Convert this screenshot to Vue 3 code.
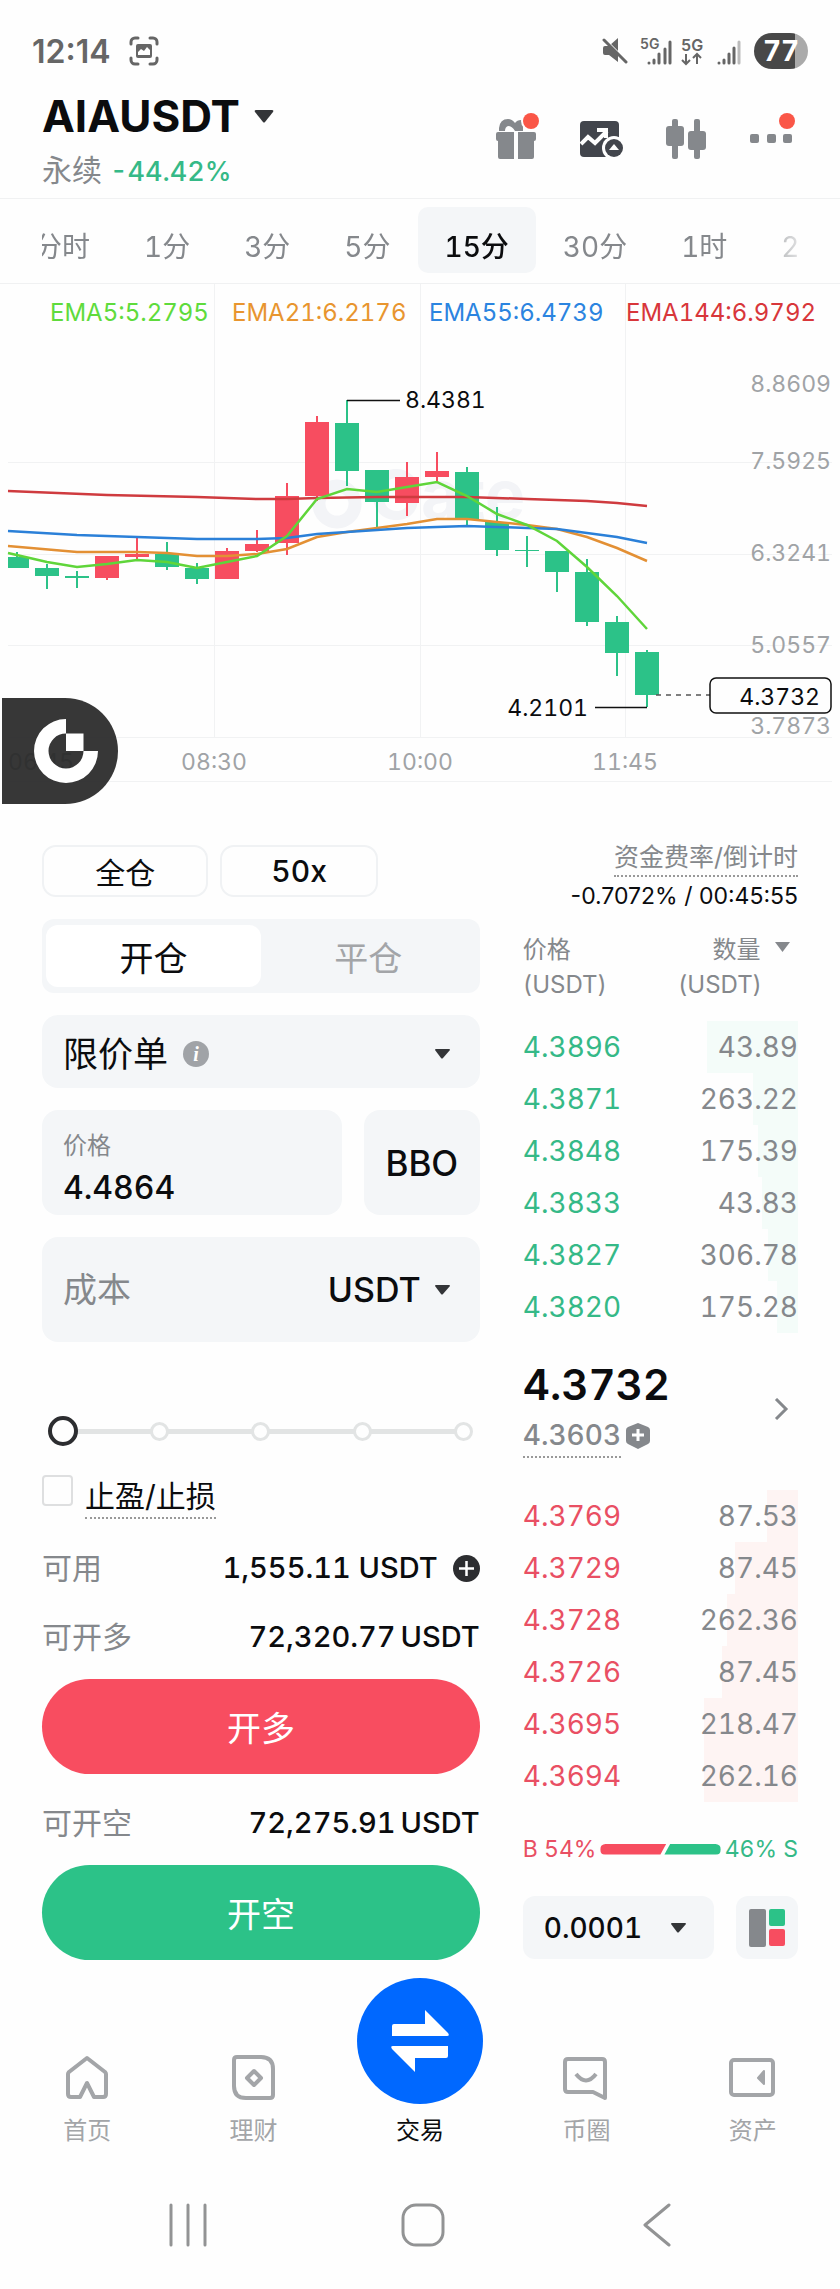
<template>
  <div class="trade-page">
    <!-- Строка состояния телефона -->
    <div class="status-bar">
      <div class="status-left">
        <span class="clock">12:14</span>
        <svg width="30" height="30" viewBox="0 0 30 30" fill="none">
          <path d="M2 8V6a4 4 0 0 1 4-4h3M21 2h3a4 4 0 0 1 4 4v2M28 22v2a4 4 0 0 1-4 4h-3M9 28H6a4 4 0 0 1-4-4v-2" stroke="#666" stroke-width="3" stroke-linecap="round" />
          <rect x="7" y="8" width="16" height="14" rx="2" fill="#666" />
          <path d="M9 19v-3l3-3 3 2 3-4 3 3v5z" fill="#fff" />
        </svg>
      </div>
      <div class="status-right">
        <svg class="mute" width="28" height="28" viewBox="0 0 28 28">
          <path d="M3 11q0-2 2-2h4l9-8v24l-9-7H5q-2 0-2-2z" fill="#666" />
          <path d="M1 -1L28 26" stroke="#fefefe" stroke-width="3" />
          <path d="M4 3L26 25" stroke="#666" stroke-width="3" stroke-linecap="round" />
        </svg>
        <svg width="64" height="32" viewBox="0 0 64 32">
          <text x="0" y="14" class="net" font-size="14">5G</text>
          <path d="M9 28v0M14 25v3M19 19v9M25 14v14M30 7v21" stroke="#666" stroke-width="3" stroke-linecap="round" />
          <text x="41" y="16" class="net" font-size="16">5G</text>
          <path d="M46 19v10M42 25l4 4 4-4M57 29V19M53 23l4-4 4 4" fill="none" stroke="#666" stroke-width="2" />
        </svg>
        <svg width="26" height="32" viewBox="0 0 26 32">
          <path d="M3 28v0M8 25v3M13 19v9M18 13v15" stroke="#666" stroke-width="3" stroke-linecap="round" />
          <path d="M23 7v21" stroke="#bbb" stroke-width="3" stroke-linecap="round" />
        </svg>
        <span class="battery">77</span>
      </div>
    </div>

    <!-- Заголовок пары -->
    <header class="pair-header">
      <div>
        <button class="pair">
          AIAUSDT
          <svg width="20" height="13" viewBox="0 0 20 13"><path d="M2 0h16q2 0 1 2l-8 10q-1 1-2 0L1 2q-1-2 1-2z" fill="#333538" /></svg>
        </button>
        <div class="pair-sub">永续 <span class="change">-44.42%</span></div>
      </div>
      <div class="actions">
        <button aria-label="礼物">
          <svg width="44" height="48" viewBox="0 0 44 48" fill="#85888c">
            <path d="M4 20v-3q1-9 9-9 4 0 7 4 2-3 6-3l2 1v10h-8q-3-5-7-5-3 1-3 5z" />
            <path d="M3 21h16v27H5q-2 0-2-2V30q-2 0-2-2v-5q0-2 2-2zM23 21h16q2 0 2 2v5q0 2-2 2v16q0 2-2 2H23z" />
            <circle cx="36" cy="10" r="10" fill="#fefefe" />
            <circle cx="36" cy="10" r="8" fill="#fa5647" />
          </svg>
        </button>
        <button aria-label="图表">
          <svg width="44" height="48" viewBox="0 0 44 48">
            <rect x="0" y="10" width="39" height="36" rx="4" fill="#42454c" />
            <path d="M1 33l7-7 7 6 12-12M17 19h9v8" fill="none" stroke="#fefefe" stroke-width="4" />
            <circle cx="34" cy="37" r="12" fill="#fefefe" />
            <circle cx="34" cy="37" r="9" fill="#42454c" />
            <path d="M34 33l5 6H29z" fill="#fefefe" />
          </svg>
        </button>
        <button aria-label="K线">
          <svg width="44" height="48" viewBox="0 0 44 48" fill="#85888c">
            <rect x="1" y="15" width="18" height="20" rx="3" />
            <rect x="7" y="8" width="6" height="40" rx="2" />
            <rect x="23" y="20" width="18" height="19" rx="3" />
            <rect x="29" y="8" width="6" height="40" rx="2" />
          </svg>
        </button>
        <button aria-label="更多">
          <svg width="46" height="48" viewBox="0 0 46 48" fill="#85888c">
            <rect x="0" y="23" width="9" height="9" rx="2" />
            <rect x="17" y="23" width="9" height="9" rx="2" />
            <rect x="33" y="23" width="9" height="9" rx="2" />
            <circle cx="37" cy="10" r="8" fill="#fa5647" />
          </svg>
        </button>
      </div>
    </header>

    <!-- Интервалы -->
    <nav class="intervals">
      <div class="intervals-clip">
        <div class="intervals-list">
          <button
            v-for="item in intervals"
            :key="item"
            :class="{ active: item === interval }"
            @click="interval = item"
          >{{ item }}</button>
        </div>
      </div>
    </nav>

    <!-- График -->
    <section class="chart">
      <svg class="chart-svg" viewBox="0 283 840 500">
        <g stroke="#f1f2f3" stroke-width="1">
          <path v-for="x in [214.5, 420.5, 625.5]" :key="x" :d="`M${x} 283V736`" />
          <path v-for="y in [461.5, 553.5, 644.5, 736.5, 780.5]" :key="y" :d="`M8 ${y}H832`" />
        </g>
        <circle cx="337" cy="503" r="18" fill="none" stroke="#f3f4f7" stroke-width="13" />
        <text x="370" y="518" class="watermark">Gate</text>

        <g v-for="(c, i) in candles" :key="i" :fill="c.up ? '#f74d60' : '#2cc288'">
          <rect :x="c.x - 1" :y="c.high" width="2" :height="c.low - c.high" />
          <rect :x="c.x - c.half" :y="c.top" :width="c.half + 12" :height="c.bottom - c.top" />
        </g>
        <polyline v-for="e in emas" :key="e.name" :points="e.points" :stroke="e.line" fill="none" stroke-width="2.5" />

        <g class="ema">
          <text v-for="e in emas" :key="e.name" :x="e.x" y="320" :fill="e.color">{{ e.name }}:{{ e.value }}</text>
        </g>
        <g class="scale">
          <text v-for="p in scale" :key="p.label" x="831" :y="p.y" text-anchor="end">{{ p.label }}</text>
          <text v-for="t in times" :key="t.label" :x="t.x" y="769" text-anchor="middle">{{ t.label }}</text>
        </g>
        <path d="M347 399.5H400M595 706.5H647" stroke="#111" stroke-width="1.5" />
        <path d="M656 694H710" stroke="#555" stroke-width="1.5" stroke-dasharray="5 5" />
        <rect x="710" y="677" width="121" height="35" rx="6" fill="#fefefe" stroke="#111" stroke-width="1.5" />
        <g class="mark">
          <text x="405" y="407">8.4381</text>
          <text x="588" y="715" text-anchor="end">4.2101</text>
          <text x="820" y="704" text-anchor="end">4.3732</text>
        </g>
      </svg>
      <button class="float-logo" aria-label="Gate">
        <svg width="64" height="64" viewBox="0 0 64 64" fill="#fff">
          <path d="M32 0a32 32 0 1 0 32 32H49.500a17.500 17.500 0 1 1-17.500-17.500z" />
          <path d="M32 14.500h17.500V32H32z" />
        </svg>
      </button>
    </section>

    <main class="trade">
      <!-- Форма ордера -->
      <form class="order-form" @submit.prevent>
        <div class="mode-row">
          <button type="button">全仓</button>
          <button type="button" class="latin">50x</button>
        </div>

        <div class="toggle">
          <button type="button" :class="{ active: side === 'open' }" @click="side = 'open'">开仓</button>
          <button type="button" :class="{ active: side === 'close' }" @click="side = 'close'">平仓</button>
        </div>

        <div class="field type-field">
          <select v-model="orderType" aria-label="限价单">
            <option>限价单</option>
          </select>
          <svg width="26" height="26" viewBox="0 0 26 26">
            <circle cx="13" cy="13" r="13" fill="#a0a3a7" />
            <text x="13" y="20" text-anchor="middle" class="info">i</text>
          </svg>
          <svg class="arrow" width="15" height="10" viewBox="0 0 15 10"><path d="M1 0h13q1 0 1 1L8 9q-1 1-2 0L0 1q0-1 1-1z" fill="#333538" /></svg>
        </div>

        <div class="price-row">
          <div class="field price-field">
            <label for="price">价格</label>
            <input id="price" v-model="price" type="text" />
          </div>
          <button type="button" class="bbo">BBO</button>
        </div>

        <div class="field cost-field">
          <input v-model="cost" type="text" placeholder="成本" aria-label="成本" />
          <select v-model="unit" aria-label="USDT">
            <option>USDT</option>
          </select>
          <svg width="15" height="10" viewBox="0 0 15 10"><path d="M1 0h13q1 0 1 1L8 9q-1 1-2 0L0 1q0-1 1-1z" fill="#333538" /></svg>
        </div>

        <div class="slider">
          <div class="slider-track"><i v-for="n in 5" :key="n"></i></div>
          <input v-model="percent" type="range" min="0" max="100" aria-label="比例" />
        </div>

        <div class="tpsl">
          <input id="tpsl" v-model="tpsl" type="checkbox" />
          <label for="tpsl">止盈/止损</label>
        </div>

        <div class="info-row">
          <span class="name">可用</span>
          <span class="value">1,555.11 USDT</span>
          <button type="button" class="plus" aria-label="充值">
            <svg width="27" height="27" viewBox="0 0 27 27">
              <circle cx="13.500" cy="13.500" r="13.500" fill="#2c2d30" />
              <path d="M13.500 6v15M6 13.500h15" stroke="#fff" stroke-width="2.500" />
            </svg>
          </button>
        </div>
        <div class="info-row">
          <span class="name">可开多</span>
          <span class="value">72,320.77&thinsp;USDT</span>
        </div>
        <button type="submit" class="submit long">开多</button>
        <div class="info-row">
          <span class="name">可开空</span>
          <span class="value">72,275.91&thinsp;USDT</span>
        </div>
        <button type="submit" class="submit short">开空</button>
      </form>

      <!-- Стакан -->
      <section class="book">
        <div class="funding">
          <span class="funding-name">资金费率/倒计时</span>
          <span class="funding-value">-0.7072% / 00:45:55</span>
        </div>

        <table>
          <thead>
            <tr>
              <th>价格<br />(USDT)</th>
              <th class="qty-head">
                数量
                <svg width="15" height="10" viewBox="0 0 15 10"><path d="M0 0h15L7.500 10z" fill="#85888c" /></svg>
                <br /><span>(USDT)</span>
              </th>
            </tr>
          </thead>
          <tbody class="green">
            <tr v-for="row in upper" :key="row.price">
              <td>{{ row.price }}</td>
              <td>
                <span class="depth" :style="{ width: row.depth + '%' }"></span>
                <span class="qty">{{ row.qty }}</span>
              </td>
            </tr>
          </tbody>
        </table>

        <div class="last">
          <div>
            <div class="last-price">4.3732</div>
            <div class="index">
              <span>4.3603</span>
              <svg width="24" height="26" viewBox="0 0 24 26">
                <path d="M12 0l10 4q2 1 2 3v11q0 2-2 3l-10 5-10-5q-2-1-2-3V7q0-2 2-3z" fill="#85888c" />
                <path d="M12 6v12M6 12h12" stroke="#fff" stroke-width="3" />
              </svg>
            </div>
          </div>
          <svg width="16" height="22" viewBox="0 0 16 22"><path d="M2 1l10 10L2 21" fill="none" stroke="#85888c" stroke-width="3" /></svg>
        </div>

        <table>
          <tbody class="red">
            <tr v-for="row in lower" :key="row.price">
              <td>{{ row.price }}</td>
              <td>
                <span class="depth" :style="{ width: row.depth + '%' }"></span>
                <span class="qty">{{ row.qty }}</span>
              </td>
            </tr>
          </tbody>
        </table>

        <div class="ratio">
          <span class="buy">B 54%</span>
          <span class="bar bar-buy"></span>
          <span class="bar bar-sell"></span>
          <span class="sell">46% S</span>
        </div>

        <div class="book-controls">
          <div class="field step-field">
            <select v-model="step" aria-label="0.0001">
              <option>0.0001</option>
            </select>
            <svg width="15" height="10" viewBox="0 0 15 10"><path d="M1 0h13q1 0 1 1L8 9q-1 1-2 0L0 1q0-1 1-1z" fill="#333538" /></svg>
          </div>
          <button class="layout-button" aria-label="布局">
            <svg width="36" height="38" viewBox="0 0 36 38">
              <rect width="17" height="38" rx="2" fill="#85888c" />
              <rect x="20" width="16" height="17" rx="2" fill="#2cc288" />
              <rect x="20" y="20" width="16" height="17" rx="2" fill="#f74d60" />
            </svg>
          </button>
        </div>
      </section>
    </main>

    <!-- Нижнее меню -->
    <nav class="tab-bar">
      <a href="#">
        <svg class="tab-icon" width="52" height="52" viewBox="0 0 52 52">
          <path d="M26 6L44 20q1 1 1 2v20q0 3-3 3h-9l-7-14-7 14h-9q-3 0-3-3V22q0-1 1-2z" />
        </svg>
        首页
      </a>
      <a href="#">
        <svg class="tab-icon" width="52" height="52" viewBox="0 0 52 52">
          <path d="M9 5h24q12 0 12 12v26q0 3-3 3H18Q6 46 6 34V8q0-3 3-3z" />
          <path d="M26 19l7 7-7 7-7-7z" />
        </svg>
        理财
      </a>
      <a href="#" class="current">
        <span class="trade-circle">
          <svg width="60" height="64" viewBox="0 0 60 64" fill="#fff">
            <path d="M2 17q0-2 2-2h31V1l23 23q2 3-1 3H2zM58 47q0 2-2 2H25v14L2 40q-2-3 1-3h55z" />
          </svg>
        </span>
        交易
      </a>
      <a href="#">
        <svg class="tab-icon" width="52" height="52" viewBox="0 0 52 52">
          <path d="M8 7h34q3 0 3 3v36l-12-6H8q-3 0-3-3V10q0-3 3-3z" />
          <path d="M16 22q10 13 20 0" />
        </svg>
        币圈
      </a>
      <a href="#">
        <svg class="tab-icon" width="52" height="52" viewBox="0 0 52 52">
          <rect x="4" y="8" width="42" height="35" rx="3" />
          <path d="M37 19v13l-6-6z" fill="#a3a5a8" stroke-width="2" />
        </svg>
        资产
      </a>
    </nav>

    <!-- Системные кнопки -->
    <div class="system-nav">
      <button aria-label="最近">
        <svg width="40" height="44" viewBox="0 0 40 44"><path d="M2 2v40M19 2v40M36 2v40" class="sys" /></svg>
      </button>
      <button aria-label="主页">
        <svg width="44" height="44" viewBox="0 0 44 44"><rect x="2" y="2" width="40" height="40" rx="13" class="sys" /></svg>
      </button>
      <button aria-label="返回">
        <svg width="28" height="44" viewBox="0 0 28 44"><path d="M26 2L2 22l24 20" class="sys" /></svg>
      </button>
    </div>
  </div>
</template>

<script setup>
import { ref } from 'vue';

const intervals = ['分时', '1分', '3分', '5分', '15分', '30分', '1时', '2时'];
const interval = ref('15分');
const side = ref('open');
const orderType = ref('限价单');
const price = ref('4.4864');
const cost = ref('');
const unit = ref('USDT');
const percent = ref(0);
const tpsl = ref(false);
const step = ref('0.0001');

// СВЕЧИ: x, high, low, верх и низ тела, рост
// Первая свеча обрезана левым краем графика
const candles = [
  [17, 551, 567, 556, 567, false],
  [47, 563, 588, 567, 575, false],
  [77, 570, 587, 575, 577, false],
  [107, 555, 579, 555, 577, true],
  [137, 536, 558, 553, 556, true],
  [167, 541, 569, 553, 566, false],
  [197, 562, 583, 567, 578, false],
  [227, 547, 578, 550, 578, true],
  [257, 529, 551, 543, 550, true],
  [287, 482, 554, 495, 542, true],
  [317, 415, 500, 421, 495, true],
  [347, 399, 485, 422, 470, false],
  [377, 469, 527, 469, 501, false],
  [407, 461, 515, 476, 502, true],
  [437, 451, 480, 470, 476, true],
  [467, 466, 524, 471, 518, false],
  [497, 506, 555, 521, 549, false],
  [527, 535, 566, 549, 550, false],
  [557, 550, 591, 550, 571, false],
  [587, 558, 625, 571, 621, false],
  [617, 615, 675, 621, 652, false],
  [647, 649, 706, 651, 694, false]
].map(([x, high, low, top, bottom, up]) => ({ x, high, low, top, bottom, up, half: Math.min(12, x - 8) }));

const emas = [
  {
    name: 'EMA144',
    value: '6.9792',
    x: 626,
    color: '#d8363a',
    line: '#cf3b3f',
    points: '8,490 107,494 197,496 257,498 287,498 317,497 377,496 437,496 467,496 527,498 557,499 587,500 617,502 647,505'
  },
  {
    name: 'EMA21',
    value: '6.2176',
    x: 232,
    color: '#e8952f',
    line: '#e39034',
    points: '8,545 77,551 137,551 167,552 197,555 227,555 257,553 287,548 317,536 347,531 377,527 407,523 437,518 467,518 497,521 527,524 557,528 587,536 617,547 647,560'
  },
  {
    name: 'EMA55',
    value: '6.4739',
    x: 429,
    color: '#2b84e0',
    line: '#2b80d8',
    points: '8,530 77,534 137,536 197,538 257,538 287,537 317,533 347,531 377,529 407,527 437,526 467,525 527,527 557,528 587,532 617,536 647,542'
  },
  {
    name: 'EMA5',
    value: '5.2795',
    x: 50,
    color: '#5fdb3c',
    line: '#5fd53a',
    points: '8,552 47,561 77,566 107,563 137,559 167,561 197,567 227,561 257,555 287,535 317,498 347,488 377,491 407,486 437,481 467,495 497,513 527,524 557,540 587,566 617,595 647,628'
  }
];

const scale = [
  { label: '8.8609', y: 391 },
  { label: '7.5925', y: 468 },
  { label: '6.3241', y: 560 },
  { label: '5.0557', y: 652 },
  { label: '3.7873', y: 733 }
];

const times = [
  { label: '06:45', x: 41 },
  { label: '08:30', x: 214 },
  { label: '10:00', x: 420 },
  { label: '11:45', x: 625 }
];

// СТАКАН
const upper = [
  { price: '4.3896', qty: '43.89', depth: 55 },
  { price: '4.3871', qty: '263.22', depth: 27 },
  { price: '4.3848', qty: '175.39', depth: 24 },
  { price: '4.3833', qty: '43.83', depth: 22 },
  { price: '4.3827', qty: '306.78', depth: 18 },
  { price: '4.3820', qty: '175.28', depth: 13 }
];

const lower = [
  { price: '4.3769', qty: '87.53', depth: 19 },
  { price: '4.3729', qty: '87.45', depth: 38 },
  { price: '4.3728', qty: '262.36', depth: 43 },
  { price: '4.3726', qty: '87.45', depth: 46 },
  { price: '4.3695', qty: '218.47', depth: 57 },
  { price: '4.3694', qty: '262.16', depth: 57 }
];
</script>

<style>
body {
  background: #fefefe;
}
</style>

<style scoped>
.trade-page {
  font-family: 'Inter', 'Noto Sans CJK SC', sans-serif;
  font-variant-numeric: tabular-nums;
  color: #0b0c0e;
  background: #fefefe;
}

.trade-page * {
  box-sizing: border-box;
}

button, input, select {
  font: inherit;
  color: inherit;
  margin: 0;
  padding: 0;
  border: none;
  background: none;
  outline: none;
}

button {
  cursor: pointer;
}

select {
  appearance: none;
}

svg {
  display: block;
  flex-shrink: 0;
}

/* СТРОКА СОСТОЯНИЯ */
.status-bar {
  display: flex;
  justify-content: space-between;
  align-items: center;
  height: 88px;
  padding: 14px 32px 0;
  color: #666;
}

.status-left, .status-right {
  display: flex;
  align-items: center;
}

.status-left {
  gap: 18px;
}

.status-right {
  gap: 12px;
}

.clock {
  font-size: 32px;
  font-weight: 600;
  font-variant-numeric: normal;
}

.net {
  font-weight: 600;
  fill: #666;
}

.battery {
  width: 54px;
  height: 36px;
  border-radius: 18px;
  background: linear-gradient(90deg, #484848 76%, #aaa 76%);
  color: #fff;
  font-size: 28px;
  line-height: 36px;
  font-weight: 700;
  text-align: center;
}

/* ЗАГОЛОВОК */
.pair-header {
  display: flex;
  justify-content: space-between;
  padding: 2px 44px 8px 42px;
  border-bottom: 1px solid #f0f1f2;
}

.pair {
  display: flex;
  align-items: center;
  gap: 14px;
  font-size: 44px;
  line-height: 52px;
  font-weight: 700;
}

.pair-sub {
  margin-top: 10px;
  font-size: 30px;
  line-height: 36px;
  color: #85888c;
}

.change {
  color: #35b987;
  font-size: 27px;
  font-weight: 500;
}

.actions {
  display: flex;
  gap: 41px;
  padding-top: 21px;
}

.actions button {
  height: 48px;
}

/* ИНТЕРВАЛЫ */
.intervals {
  padding: 8px 42px 10px;
  border-bottom: 1px solid #f0f1f2;
}

.intervals-clip {
  overflow: hidden;
  mask-image: linear-gradient(90deg, #000 94%, transparent 102%);
}

.intervals-list {
  display: flex;
  margin-left: -35px;
}

.intervals button {
  flex-shrink: 0;
  height: 66px;
  padding: 10px 27px 0;
  border-radius: 10px;
  font-size: 28px;
  color: #85888c;
}

.intervals .active {
  background: #f4f6f8;
  color: #0b0c0e;
  font-weight: 500;
}

/* ГРАФИК */
.chart {
  position: relative;
}

.chart-svg {
  width: 100%;
  height: auto;
}

.ema {
  font-size: 24px;
}

.scale, .mark {
  font-size: 23px;
}

.watermark {
  font-size: 68px;
  font-weight: 700;
  fill: #f3f4f7;
}

.scale {
  fill: #a0a3a6;
}

.mark {
  fill: #0b0c0e;
}

.float-logo {
  position: absolute;
  left: 2px;
  bottom: -20px;
  display: flex;
  align-items: center;
  justify-content: center;
  width: 116px;
  height: 106px;
  padding-left: 12px;
  border-radius: 0 53px 53px 0;
  background: rgba(40, 40, 40, 0.93);
}

/* ТОРГОВЛЯ */
.trade {
  display: grid;
  grid-template-columns: 35fr 22fr;
  gap: 43px;
  padding: 56px 42px 18px;
}

.order-form {
  display: flex;
  flex-direction: column;
  gap: 22px;
  padding-top: 5px;
  min-width: 0;
}

.mode-row {
  display: flex;
  gap: 12px;
}

.mode-row button {
  flex: 0 0 38%;
  height: 52px;
  border: 2px solid #f0f2f4;
  border-radius: 14px;
  font-size: 30px;
}

.mode-row .latin {
  flex-basis: 36%;
  font-weight: 500;
}

.toggle {
  display: grid;
  grid-template-columns: 1fr 1fr;
  padding: 6px 4px;
  border-radius: 12px;
  background: #f4f6f8;
}

.toggle button {
  height: 62px;
  border-radius: 12px;
  font-size: 34px;
  color: #a3a5a8;
}

.toggle .active {
  background: #fff;
  color: #0b0c0e;
}

.field {
  display: flex;
  align-items: center;
  padding: 0 30px 0 21px;
  border-radius: 16px;
  background: #f4f6f8;
}

.type-field {
  height: 73px;
  padding-top: 4px;
  gap: 14px;
  font-size: 35px;
}

.info {
  font: italic bold 20px 'Liberation Serif', serif;
  fill: #fff;
}

.arrow {
  margin-left: auto;
}

.price-row {
  display: flex;
  gap: 22px;
}

.price-field {
  flex: 1;
  min-width: 0;
  flex-direction: column;
  align-items: flex-start;
  justify-content: center;
  height: 105px;
  padding-top: 10px;
}

.price-field label {
  font-size: 24px;
  line-height: 40px;
  color: #85888c;
}

.price-field input {
  width: 100%;
  height: 44px;
  font-size: 32px;
  font-weight: 500;
}

.bbo {
  width: 116px;
  border-radius: 16px;
  background: #f4f6f8;
  font-size: 35px;
  font-weight: 500;
}

.cost-field {
  height: 105px;
  gap: 14px;
  font-size: 34px;
}

.cost-field input {
  flex: 1;
  min-width: 0;
}

.cost-field input::placeholder {
  color: #85888c;
}

.cost-field select {
  font-weight: 500;
}

.slider {
  position: relative;
  height: 30px;
  margin: 52px 6px 0;
}

.slider-track {
  display: flex;
  align-items: center;
  justify-content: space-between;
  height: 30px;
  padding: 0 1px;
  background: linear-gradient(#e2e4e4, #e2e4e4) center / 96% 5px no-repeat;
}

.slider-track i {
  width: 19px;
  height: 19px;
  border: 3px solid #e2e4e4;
  border-radius: 50%;
  background: #fefefe;
}

.slider input {
  position: absolute;
  inset: 0;
  width: 100%;
  appearance: none;
}

.slider input::-webkit-slider-thumb {
  appearance: none;
  width: 30px;
  height: 30px;
  border: 4px solid #2c2d30;
  border-radius: 50%;
  background: #fefefe;
}

.tpsl {
  display: flex;
  align-items: flex-start;
  gap: 12px;
  margin-top: 7px;
}

.tpsl input {
  appearance: none;
  width: 31px;
  height: 31px;
  border: 2px solid #dedfe0;
  border-radius: 4px;
}

.tpsl label {
  border-bottom: 2px dotted #999;
  font-size: 30px;
  line-height: 42px;
}

.info-row {
  display: flex;
  align-items: center;
  margin-top: 7px;
  font-size: 30px;
  line-height: 40px;
}

.name {
  flex: 1;
  color: #85888c;
}

.value {
  font-size: 29px;
  font-weight: 500;
}

.plus {
  margin-left: 15px;
}

.submit {
  height: 95px;
  border-radius: 48px;
  color: #fff;
  font-size: 34px;
}

.long {
  background: #f84d60;
}

.short {
  background: #2cc288;
}

/* СТАКАН */
.book {
  min-width: 0;
}

.funding {
  display: flex;
  flex-direction: column;
  align-items: flex-end;
  white-space: nowrap;
}

.funding-name {
  border-bottom: 2px dotted #999;
  line-height: 35px;
  font-size: 25px;
  color: #85888c;
}

.funding-value {
  font-size: 23px;
  line-height: 38px;
  font-variant-numeric: normal;
}

table {
  width: 100%;
  border-collapse: collapse;
}

th {
  padding: 17px 0 19px;
  font-size: 24px;
  line-height: 35px;
  font-weight: 400;
  text-align: left;
  color: #85888c;
}

.qty-head {
  padding-right: 8px;
  text-align: right;
}

.qty-head svg {
  display: inline-block;
  margin-left: 8px;
  vertical-align: 6px;
}

.qty-head span {
  padding-right: 28px;
}

td {
  position: relative;
  height: 52px;
  padding: 0;
  font-size: 28px;
  line-height: 52px;
}

td:last-child {
  text-align: right;
  width: 60%;
  color: #85888c;
}

.green td:first-child {
  color: #35b987;
}

.red td:first-child {
  color: #e94f63;
}

.depth {
  position: absolute;
  top: 0;
  right: 0;
  height: 52px;
  background: #f4fcf9;
}

.red .depth {
  background: #fef4f3;
}

.qty {
  position: relative;
}

.last {
  display: flex;
  align-items: center;
  justify-content: space-between;
  padding: 27px 8px 32px 0;
}

.last-price {
  font-size: 42px;
  line-height: 50px;
  font-weight: 600;
}

.index {
  display: flex;
  align-items: center;
  gap: 5px;
  margin-top: 4px;
  font-size: 28px;
  line-height: 42px;
  font-weight: 500;
  color: #85888c;
}

.index span {
  border-bottom: 2px dotted #999;
}

.ratio {
  display: flex;
  align-items: center;
  margin-top: 32px;
  font-size: 23px;
  line-height: 30px;
  white-space: nowrap;
}

.buy {
  margin-right: 4px;
  color: #e94f63;
}

.sell {
  margin-left: 4px;
  color: #35b987;
}

.bar {
  height: 11px;
}

.bar-buy {
  flex: 54;
  border-radius: 6px 0 0 6px;
  background: #f74d60;
  clip-path: polygon(0 0, 100% 0, calc(100% - 6px) 100%, 0 100%);
}

.bar-sell {
  flex: 46;
  margin-left: -2px;
  border-radius: 0 6px 6px 0;
  background: #2cc288;
  clip-path: polygon(6px 0, 100% 0, 100% 100%, 0 100%);
}

.book-controls {
  display: flex;
  gap: 22px;
  margin-top: 32px;
}

.step-field {
  flex: 1;
  justify-content: space-between;
  height: 63px;
  padding-right: 28px;
  border-radius: 12px;
  font-size: 28px;
  font-weight: 500;
}

.layout-button {
  display: flex;
  align-items: center;
  justify-content: center;
  width: 62px;
  height: 63px;
  border-radius: 12px;
  background: #f4f6f8;
}

/* НИЖНЕЕ МЕНЮ */
.tab-bar {
  display: flex;
  align-items: flex-end;
  padding: 0 4px;
}

.tab-bar a {
  flex: 1;
  display: flex;
  flex-direction: column;
  align-items: center;
  gap: 12px;
  color: #a3a5a8;
  font-size: 24px;
  line-height: 30px;
  text-decoration: none;
}

.tab-bar .current {
  color: #0b0c0e;
}

.tab-icon {
  fill: none;
  stroke: #a3a5a8;
  stroke-width: 4;
  stroke-linejoin: round;
}

.trade-circle {
  display: flex;
  align-items: center;
  justify-content: center;
  width: 126px;
  height: 126px;
  border-radius: 50%;
  background: #0068ff;
}

/* СИСТЕМНЫЕ КНОПКИ */
.system-nav {
  display: flex;
  padding: 57px 66px 43px 72px;
}

.system-nav button {
  flex: 1;
  display: flex;
  justify-content: center;
}

.sys {
  fill: none;
  stroke: #929394;
  stroke-width: 3;
  stroke-linecap: round;
  stroke-linejoin: round;
}
</style>
